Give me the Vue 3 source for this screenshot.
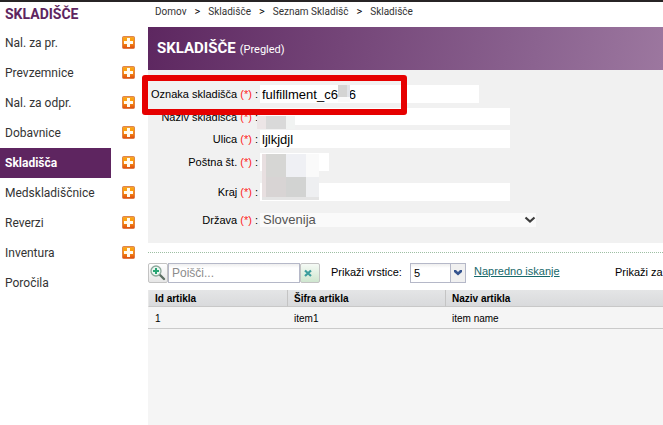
<script setup>
import { ref } from 'vue'

const menu = [
  { label: 'Nal. za pr.', add: true },
  { label: 'Prevzemnice', add: true },
  { label: 'Nal. za odpr.', add: true },
  { label: 'Dobavnice', add: true },
  { label: 'Skladišča', add: true, active: true },
  { label: 'Medskladiščnice', add: true },
  { label: 'Reverzi', add: true },
  { label: 'Inventura', add: true },
  { label: 'Poročila', add: false }
]

const crumbs = ['Domov', 'Skladišče', 'Seznam Skladišč', 'Skladišče']

const fields = ref([
  { id: 'oznaka', label: 'Oznaka skladišča', value: 'fulfillment_c6\u00a0\u00a0\u00a06' },
  { id: 'naziv', label: 'Naziv skladišča', value: '' },
  { id: 'ulica', label: 'Ulica', value: 'ljlkjdjl' },
  { id: 'posta', label: 'Poštna št.', value: '' },
  { id: 'kraj', label: 'Kraj', value: '' }
])

const country = ref('Slovenija')
const search = ref('')
const pageSize = ref('5')
const rows = [{ id: '1', code: 'item1', name: 'item name' }]
</script>

<template>
  <div class="page">
    <div class="topbar"></div>
    <div class="body">
      <nav class="sidebar">
        <h2>SKLADIŠČE</h2>
        <ul>
          <li v-for="m in menu" :key="m.label">
            <a href="#" :class="{ active: m.active }">{{ m.label }}</a>
            <button v-if="m.add" class="add" type="button" :aria-label="m.label">
              <svg width="13" height="13" viewBox="0 0 13 13">
                <defs>
                  <linearGradient id="plusFill" x1="0" y1="0" x2="0" y2="1">
                    <stop offset="0" stop-color="#e9a04a" />
                    <stop offset="0.15" stop-color="#fba612" />
                    <stop offset="0.5" stop-color="#f99310" />
                    <stop offset="1" stop-color="#dd4a10" />
                  </linearGradient>
                </defs>
                <rect x="0.5" y="0.5" width="12" height="12" rx="1" fill="url(#plusFill)" stroke="#d9703a" stroke-opacity="0.8" />
                <path d="M5 2h3v3h3v3H8v3H5V8H2V5h3z" fill="#fffaf0" />
              </svg>
            </button>
          </li>
        </ul>
      </nav>

      <main>
        <nav class="crumbs">
          <template v-for="(c, i) in crumbs" :key="i">
            <span v-if="i" class="sep">&gt;</span>
            <a href="#">{{ c }}</a>
          </template>
        </nav>
        <header>
          <h1>SKLADIŠČE</h1>
          <span>(Pregled)</span>
        </header>

        <form @submit.prevent>
          <div v-for="f in fields" :key="f.id" class="row" :class="f.id">
            <label :for="f.id">{{ f.label }} <i>(*)</i> :</label>
            <input :id="f.id" v-model="f.value" type="text" />
          </div>
          <div class="row drzava">
            <label for="drzava">Država <i>(*)</i> :</label>
            <div class="select">
              <select id="drzava" v-model="country">
                <option>Slovenija</option>
              </select>
              <svg width="12" height="8" viewBox="0 0 12 8">
                <path d="M1.500 1.500L6 5.500L10.500 1.500" fill="none" stroke="#3c3c3c" stroke-width="2.200" />
              </svg>
            </div>
          </div>
          <svg class="mask mask-code" width="12" height="17" viewBox="0 0 12 17">
            <rect width="9" height="12" fill="#d4d4d3" />
            <rect x="9" width="3" height="12" fill="#e1e3e7" />
            <rect y="12" width="12" height="5" fill="#fafafa" />
          </svg>
          <svg class="mask mask-name" width="38" height="13" viewBox="0 0 38 13">
            <rect width="9" height="13" fill="#ece5e6" />
            <rect x="9" width="20" height="13" fill="#d9d9d9" />
            <rect x="29" width="9" height="13" fill="#f1f3f2" />
          </svg>
          <svg class="mask mask-city" width="57" height="46" viewBox="0 0 57 46">
            <rect width="57" height="46" fill="#fafafa" />
            <rect width="4" height="46" fill="#e8dfe0" />
            <rect x="4" width="20" height="23" fill="#d6d6d4" />
            <rect x="24" width="20" height="23" fill="#eff0f4" />
            <rect x="4" y="23" width="20" height="20" fill="#d8d4d4" />
            <rect x="24" y="23" width="20" height="20" fill="#d2d3d2" />
            <rect x="44" y="23" width="13" height="20" fill="#eeeff1" />
            <rect y="43" width="57" height="3" fill="#e4e4e4" />
          </svg>
          <div class="highlight"></div>
        </form>

        <div class="toolbar">
          <div class="search">
            <button type="button" aria-label="Išči">
              <svg width="18" height="18" viewBox="0 0 18 18">
                <path d="M10.500 10.500L15 15" stroke="#5d6f63" stroke-width="2.400" stroke-linecap="round" />
                <circle cx="7" cy="7" r="5" fill="#e9f7f0" stroke="#8da79b" stroke-width="1.300" />
                <path d="M7 4v6M4 7h6" stroke="#27a573" stroke-width="2" />
              </svg>
            </button>
            <input v-model="search" type="text" placeholder="Poišči..." aria-label="Poišči" />
            <button type="button" class="clear" aria-label="Počisti">
              <svg width="16" height="18" viewBox="0 0 16 18">
                <path d="M4 6.500L10 12M10 6.500L4 12" stroke="#3c9d9d" stroke-width="2.200" />
              </svg>
            </button>
          </div>
          <label class="pages" for="pages">Prikaži vrstice:</label>
          <div class="combo">
            <select id="pages" v-model="pageSize">
              <option>5</option>
            </select>
            <span>
              <svg width="8" height="6" viewBox="0 0 8 6">
                <path d="M0 0h2l2 2l2-2h2v2L4 5.500L0 2z" fill="#35548f" />
              </svg>
            </span>
          </div>
          <a class="advanced" href="#">Napredno iskanje</a>
          <span class="show">Prikaži za</span>
        </div>

        <section class="grid">
          <table>
            <thead>
              <tr>
                <th class="c1">Id artikla</th>
                <th class="c2">Šifra artikla</th>
                <th>Naziv artikla</th>
              </tr>
            </thead>
            <tbody>
              <tr v-for="r in rows" :key="r.id">
                <td>{{ r.id }}</td>
                <td>{{ r.code }}</td>
                <td>{{ r.name }}</td>
              </tr>
            </tbody>
          </table>
        </section>
      </main>
    </div>
  </div>
</template>

<style>
body {
  margin: 0;
  background: #fff;
}
</style>

<style scoped>
* {
  box-sizing: border-box;
}
.page {
  display: flex;
  flex-direction: column;
  min-height: 100vh;
  overflow: hidden;
  font-family: "Liberation Sans", Arial, sans-serif;
  font-size: 11px;
  color: #000;
}
.topbar {
  height: 2px;
  background: #272425;
}
.body {
  display: flex;
  flex: 1;
}
button {
  padding: 0;
  border: 0;
  background: none;
}
svg {
  display: block;
}

.sidebar {
  flex: 0 0 148px;
  font-family: Roboto, sans-serif;
}
.sidebar h2 {
  margin: 0;
  padding: 3px 0 5px 5px;
  font-size: 14px;
  line-height: 18px;
  font-weight: 700;
  color: #5e2560;
}
.sidebar ul {
  margin: 0;
  padding: 0;
  list-style: none;
}
.sidebar li {
  display: flex;
  align-items: center;
  height: 30px;
}
.sidebar li a {
  width: 111px;
  padding-left: 5px;
  font-size: 12px;
  line-height: 30px;
  color: #333;
  text-decoration: none;
}
.sidebar li a.active {
  background: #5e2560;
  color: #fff;
  font-weight: 700;
}
.add {
  margin: 0 0 2px 11px;
}

main {
  flex: 1;
  min-width: 0;
  display: flex;
  flex-direction: column;
}
.crumbs {
  display: flex;
  gap: 8px;
  height: 25px;
  padding-left: 7px;
  font-family: Roboto, sans-serif;
  font-size: 10px;
  line-height: 20px;
}
.crumbs a {
  color: #333;
  text-decoration: none;
}
.crumbs .sep {
  font-size: 11px;
}
header {
  display: flex;
  align-items: baseline;
  gap: 4px;
  height: 43px;
  padding-left: 9px;
  font-family: Roboto, sans-serif;
  line-height: 43px;
  color: #fff;
  background: linear-gradient(100deg, #5d2760, #8b6390 75%, #9c779f);
}
header h1 {
  margin: 0;
  font-size: 15px;
  font-weight: 700;
}
header span {
  font-size: 11px;
}

form {
  position: relative;
  padding: 15px 0 16px;
  background: #f1f1f1;
}
.row {
  display: flex;
  align-items: center;
  gap: 2px;
  height: 18px;
  margin-bottom: 5px;
}
.row label {
  flex: 0 0 110px;
  text-align: right;
  white-space: nowrap;
}
.row i {
  font-style: normal;
  color: #f22;
}
.row input {
  width: 250px;
  height: 100%;
  padding: 0 2px;
  border: 0;
  background: #fff;
  font: 13px "Liberation Sans", Arial, sans-serif;
  color: #000;
}
.row.oznaka input {
  width: 219px;
}
.row.naziv {
  height: 17px;
}
.row.posta input {
  width: 69px;
}
.row.posta,
.row.kraj {
  margin-bottom: 12px;
}
.row.drzava {
  height: 14px;
  margin-bottom: 0;
}
.select {
  display: flex;
  align-items: center;
  width: 276px;
  height: 14px;
  background: #fafafa;
}
.select select {
  flex: 1;
  height: 14px;
  margin-right: -16px;
  padding: 0 3px;
  border: 0;
  appearance: none;
  background: none;
  font: 13px/14px "Liberation Sans", Arial, sans-serif;
  color: #555;
}
.mask {
  position: absolute;
}
.mask-code {
  left: 190px;
  top: 15px;
}
.mask-name {
  left: 109px;
  top: 46px;
}
.mask-city {
  left: 114px;
  top: 84px;
}
.highlight {
  position: absolute;
  left: -6px;
  top: 5px;
  width: 265px;
  height: 40px;
  border: 6px solid #e60000;
  border-radius: 3px;
}

.toolbar {
  display: flex;
  align-items: flex-start;
  height: 38px;
  margin-top: 9px;
  padding-top: 10px;
  border-top: 1px dotted #9dbfa3;
  white-space: nowrap;
  line-height: 19px;
}
.search {
  display: flex;
  flex: 0 0 172px;
  min-width: 0;
  height: 20px;
}
.search button {
  flex: 0 0 20px;
  border: 1px solid #c3c3c3;
  border-radius: 2px;
  background: linear-gradient(#fff, #e6e6e6);
}
.search .clear {
  background: linear-gradient(#f5faf5, #cfe6cf);
}
.search input {
  flex: 1;
  width: 0;
  min-width: 0;
  padding: 0 3px;
  border: 1px solid #b5b8c8;
  background: linear-gradient(#eee, #fff 4px);
  font: 12px "Liberation Sans", Arial, sans-serif;
}
.search input::placeholder {
  color: #8c8c8c;
}
.pages {
  flex: 0 0 79px;
  margin-left: 11px;
}
.combo {
  display: flex;
  flex: 0 0 56px;
  height: 20px;
  border: 1px solid #b5b8c8;
}
.combo select {
  flex: 1;
  padding: 0 3px;
  border: 0;
  appearance: none;
  background: linear-gradient(#eee, #fff 4px);
  font: 11px "Liberation Sans", Arial, sans-serif;
  color: #000;
}
.combo span {
  display: flex;
  align-items: center;
  justify-content: center;
  width: 15px;
  border-left: 1px solid #b5b8c8;
  background: #f0f0f0;
}
.advanced {
  flex: 0 0 141px;
  margin-left: 8px;
  line-height: 16px;
  color: #17686a;
}

.grid {
  flex: 1;
  background: #f5f5f5;
}
table {
  width: 100%;
  table-layout: fixed;
  border-collapse: separate;
  border-spacing: 0;
  font-size: 10px;
}
th {
  height: 17px;
  padding: 0 6px;
  text-align: left;
  border-bottom: 1px solid #c8c8c8;
  border-left: 1px solid #c4c4c4;
  background: linear-gradient(#e4e5e6, #d9dadc);
}
th.c1 {
  width: 139px;
  border-left-color: #e8e8e8;
}
th.c2 {
  width: 158px;
}
td {
  height: 22px;
  padding: 2px 7px 0;
  border-bottom: 1px solid #cacaca;
}
</style>
